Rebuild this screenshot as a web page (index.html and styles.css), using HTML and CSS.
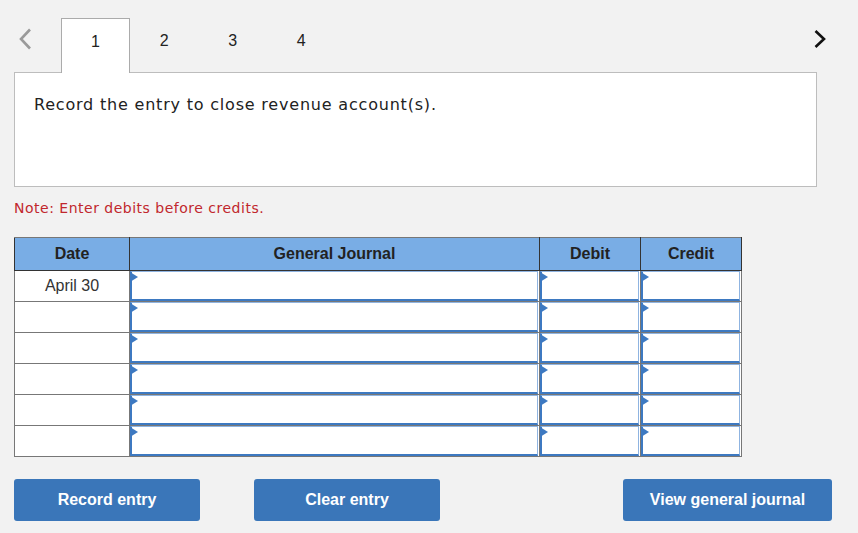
FILE: index.html
```html
<!DOCTYPE html>
<html>
<head>
<meta charset="utf-8">
<link rel="stylesheet" href="styles.css">
</head>
<body>
<nav class="steps">
  <span class="chev chev-left"><svg width="14" height="22" viewBox="0 0 14 22"><path d="M12 1.5 L3 11 L12 20.5" fill="none" stroke="#9a9a9a" stroke-width="2.6"/></svg></span>
  <div class="tabs">
    <div class="tab active">1</div>
    <div class="tab">2</div>
    <div class="tab">3</div>
    <div class="tab">4</div>
  </div>
  <span class="chev chev-right"><svg width="14" height="22" viewBox="0 0 14 22"><path d="M2.5 3 L11 11 L2.5 19" fill="none" stroke="#111" stroke-width="2.6"/></svg></span>
</nav>
<main class="main">
  <div class="question">Record the entry to close revenue account(s).</div>
  <p class="note">Note: Enter debits before credits.</p>
  <table class="journal">
    <thead>
      <tr><th class="c-date">Date</th><th class="c-gj">General Journal</th><th class="c-amt">Debit</th><th class="c-amt">Credit</th></tr>
    </thead>
    <tbody>
      <tr><td class="date">April 30</td><td><div class="inp"></div></td><td><div class="inp"></div></td><td><div class="inp"></div></td></tr>
      <tr><td class="date"></td><td><div class="inp"></div></td><td><div class="inp"></div></td><td><div class="inp"></div></td></tr>
      <tr><td class="date"></td><td><div class="inp"></div></td><td><div class="inp"></div></td><td><div class="inp"></div></td></tr>
      <tr><td class="date"></td><td><div class="inp"></div></td><td><div class="inp"></div></td><td><div class="inp"></div></td></tr>
      <tr><td class="date"></td><td><div class="inp"></div></td><td><div class="inp"></div></td><td><div class="inp"></div></td></tr>
      <tr><td class="date"></td><td><div class="inp"></div></td><td><div class="inp"></div></td><td><div class="inp"></div></td></tr>
    </tbody>
  </table>
  <div class="actions">
    <button class="btn btn-record">Record entry</button>
    <button class="btn btn-clear">Clear entry</button>
    <button class="btn btn-view">View general journal</button>
  </div>
</main>
</body>
</html>
```
FILE: styles.css
```css
html, body {
  margin: 0;
  padding: 0;
  background: #f2f2f2;
}
body {
  width: 858px;
  height: 533px;
  overflow: hidden;
  font-family: "Liberation Sans", Arial, sans-serif;
  color: #222;
}
.steps {
  display: flex;
  align-items: flex-end;
  height: 72px;
  padding-left: 14px;
  box-sizing: border-box;
}
.chev {
  display: block;
  align-self: flex-start;
  margin-top: 28px;
}
.chev svg { display: block; }
.chev-left {
  width: 47px;
  padding-left: 4px;
  box-sizing: border-box;
}
.chev-right {
  margin-left: auto;
  margin-right: 31px;
}
.tabs {
  display: flex;
  align-items: flex-end;
}
.tab {
  width: 68.5px;
  height: 54px;
  box-sizing: border-box;
  padding-top: 14px;
  text-align: center;
  font-size: 16px;
  line-height: 18px;
  color: #222;
}
.tab.active {
  background: #fff;
  border: 1px solid #ababab;
  border-bottom: none;
  margin-bottom: -1px;
  height: 55px;
  position: relative;
  z-index: 1;
  width: 69px;
}
.main {
  padding-left: 14px;
}
.question {
  width: 803px;
  height: 115px;
  box-sizing: border-box;
  background: #fff;
  border: 1px solid #bdbdbd;
  padding: 22px 19px;
  font-family: "DejaVu Sans", Verdana, sans-serif;
  font-size: 16px;
  letter-spacing: 0.8px;
  line-height: 19px;
  color: #222;
}
.note {
  margin: 12px 0 0;
  font-family: "DejaVu Sans", Verdana, sans-serif;
  font-size: 14px;
  letter-spacing: 0.5px;
  line-height: 18px;
  color: #c1272d;
}
.journal {
  margin-top: 20px;
  border-collapse: collapse;
  table-layout: fixed;
  width: 727px;
}
.journal th {
  height: 32px;
  padding: 0;
  background: #79ade5;
  border: 1px solid #333;
  border-top-color: #777;
  font-weight: bold;
  font-size: 16px;
  color: #222;
  text-align: center;
}
.c-date { width: 114px; }
.c-gj { width: 409px; }
.c-amt { width: 100px; }
.journal td {
  height: 30px;
  padding: 0;
  border: 1px solid #777;
  background: #fff;
  vertical-align: top;
}
.journal td.date {
  text-align: center;
  vertical-align: middle;
  font-size: 16px;
  color: #333;
}
.inp {
  position: relative;
  height: 30px;
  margin-right: 1px;
  box-sizing: border-box;
  background: #fff;
  border: 1px solid #8fb4e1;
  border-left: 2px solid #3d79c1;
  border-bottom: 2px solid #3d79c1;
}
.inp::before {
  content: "";
  position: absolute;
  left: -2px;
  top: 0;
  width: 0;
  height: 0;
  border-left: 8px solid #3d79c1;
  border-top: 5px solid transparent;
  border-bottom: 5px solid transparent;
}
.actions {
  display: flex;
  margin-top: 22px;
}
.btn {
  height: 42px;
  width: 186px;
  border: none;
  border-radius: 3px;
  background: #3a76b9;
  color: #fff;
  font-family: "Liberation Sans", Arial, sans-serif;
  font-weight: bold;
  font-size: 16px;
  padding: 0;
}
.btn-clear { margin-left: 54px; }
.btn-view { margin-left: 183px; width: 209px; }
```
